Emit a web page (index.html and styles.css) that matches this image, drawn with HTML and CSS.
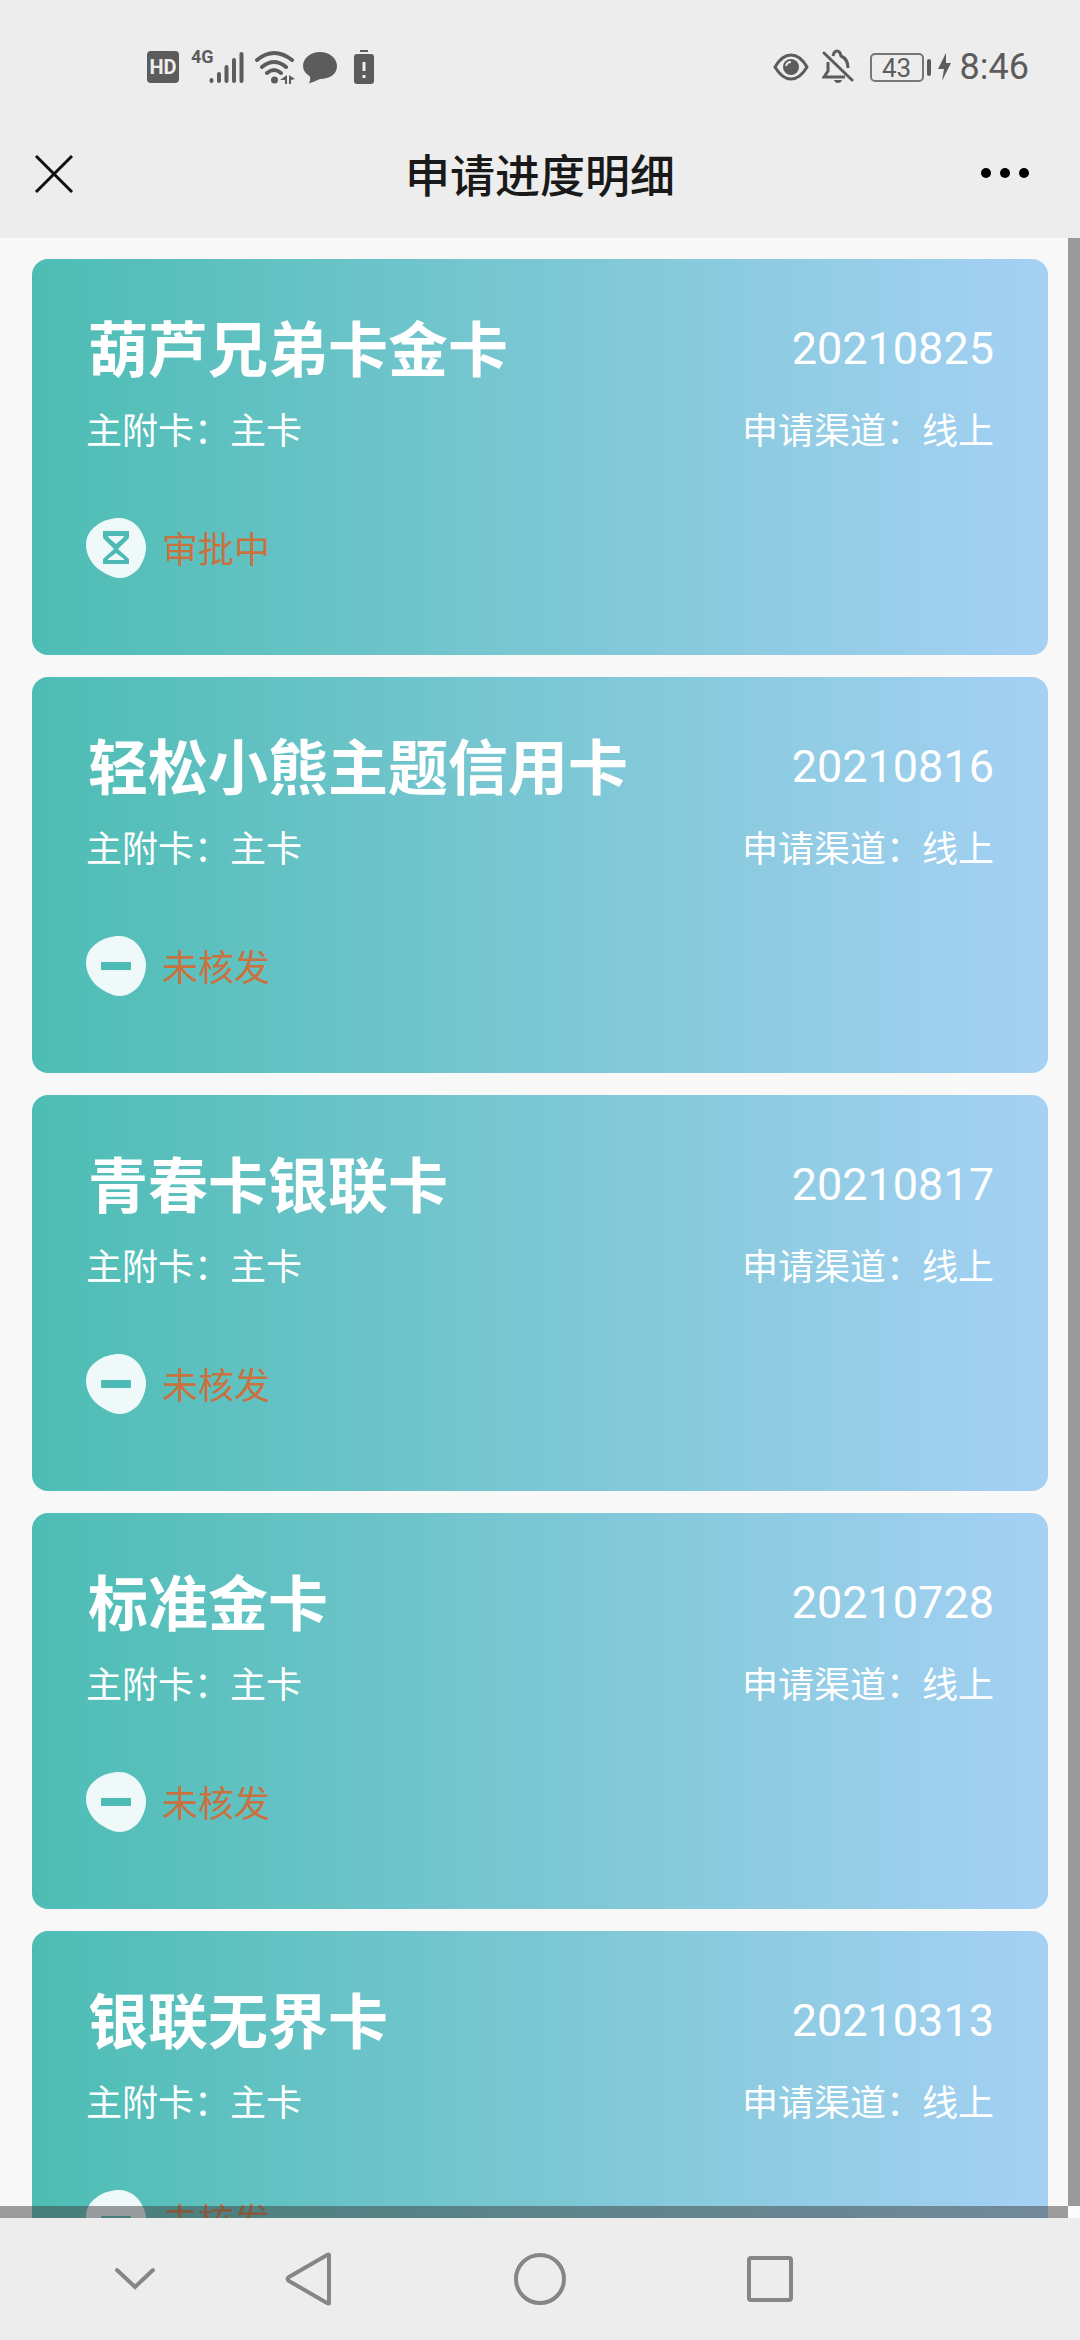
FILE: index.html
```html
<!DOCTYPE html>
<html lang="zh-CN">
<head>
<meta charset="utf-8">
<meta name="viewport" content="width=device-width, initial-scale=1">
<title>申请进度明细</title>
<link rel="stylesheet" href="styles.css">
</head>
<body>
<svg class="defs" aria-hidden="true">
  <symbol id="blob" viewBox="0 0 60 60">
    <path d="M33 0C44 0 52 7 56 15C59 21 60 25 60 29C60 37 57 44 53 50C48 56 41 60 34 60C26 60 17 55 10 49C4 43 0 35 0 27C0 18 4 12 11 7C18 2 26 0 33 0Z" fill="#f0f9fa"/>
  </symbol>
  <symbol id="pending" viewBox="0 0 60 60">
    <use href="#blob"/>
    <path d="M17 13H43V20L32 31L43 41V46H17V41L28 31L17 20ZM22 18H38L37 20L30 26L23 20ZM30 35L38 41V42H22V41Z" fill="#4fb9b5" fill-rule="evenodd"/>
  </symbol>
  <symbol id="rejected" viewBox="0 0 60 60">
    <use href="#blob"/>
    <rect x="15" y="26" width="30" height="8" rx="1" fill="#4dbbb5"/>
  </symbol>
</svg>
<div class="app">
  <div class="status">
    <div class="status-left">
      <svg width="32" height="36" viewBox="0 0 32 36"><rect y="2" width="32" height="32" rx="4" fill="#5c5c5c"/><text x="16" y="25" class="hd">HD</text></svg>
      <svg width="56" height="36" viewBox="0 0 56 36" class="signal"><text x="0" y="14" class="net">4G</text><path d="M20.500 32V31M28 32V25M35.500 32V18M43 32V11M50.500 32V5" stroke="#5c5c5c" stroke-width="4" stroke-linecap="round"/></svg>
      <svg width="40" height="36" viewBox="0 0 40 36"><g fill="none" stroke="#5c5c5c" stroke-width="4" stroke-linecap="round"><path d="M2 11Q19 -3 37 11M7 18Q19 8 31 18M12 24Q19 18 26 24"/></g><circle cx="19.500" cy="31" r="3.500" fill="#5c5c5c"/><path d="M25 31L32 26V35H30V31ZM34 26L40 30L36 31V35H34Z" fill="#5c5c5c"/></svg>
      <svg width="34" height="36" viewBox="0 0 34 36"><path d="M17 3C26 3 34 9 34 17S27 30 17 30Q13 32 6 34.500Q8 31 7 27.500Q0 23 0 17C0 9 8 3 17 3Z" fill="#5c5c5c"/></svg>
      <svg width="20" height="36" viewBox="0 0 20 36" class="low"><path d="M6 1H14V3H6ZM3 5H17Q20 5 20 8V32Q20 35 17 35H3Q0 35 0 32V8Q0 5 3 5Z" fill="#5c5c5c"/><path d="M10 13V22M10 26V29" stroke="#eee" stroke-width="3"/></svg>
    </div>
    <div class="status-right">
      <svg width="36" height="36" viewBox="0 0 36 36"><path d="M2 18Q9 6 18 6T34 18Q27 30 18 30T2 18Z" fill="none" stroke="#5c5c5c" stroke-width="3"/><circle cx="18" cy="18" r="8" fill="#5c5c5c"/><path d="M13 17Q14 13 18 13" stroke="#eee" stroke-width="2" fill="none"/></svg>
      <svg width="32" height="36" viewBox="0 0 32 36" class="bell"><g fill="none" stroke="#5c5c5c" stroke-width="3"><path d="M2 4L30 31" stroke-linecap="round"/><path d="M6 13V22L2 28H23M11 7Q12 2 15 2T19 7Q26 10 26 19"/></g><path d="M12 31H20Q19 34 16 34T12 31Z" fill="#5c5c5c"/></svg>
      <div class="battery"><span>43</span></div>
      <svg width="14" height="36" viewBox="0 0 14 36" class="bolt"><path d="M8 4L0 20H6L4 32L13 14H8Z" fill="#5c5c5c"/></svg>
      <time>8:46</time>
    </div>
  </div>
  <header class="titlebar">
    <button aria-label="关闭"><svg width="40" height="40" viewBox="0 0 40 40"><path d="M2 1L38 37M38 1L2 37" stroke="#111" stroke-width="3"/></svg></button>
    <h1>申请进度明细</h1>
    <button aria-label="更多"><svg width="50" height="40" viewBox="0 0 50 40"><circle cx="6" cy="18" r="5"/><circle cx="25" cy="18" r="5"/><circle cx="44" cy="18" r="5"/></svg></button>
  </header>
  <main class="content">
    <div class="list">
      <article class="card">
        <div class="row main"><h2>葫芦兄弟卡金卡</h2><time>20210825</time></div>
        <div class="row sub"><span>主附卡：主卡</span><span>申请渠道：线上</span></div>
        <div class="state"><svg><use href="#pending"/></svg><span>审批中</span></div>
      </article>
      <article class="card">
        <div class="row main"><h2>轻松小熊主题信用卡</h2><time>20210816</time></div>
        <div class="row sub"><span>主附卡：主卡</span><span>申请渠道：线上</span></div>
        <div class="state"><svg><use href="#rejected"/></svg><span>未核发</span></div>
      </article>
      <article class="card">
        <div class="row main"><h2>青春卡银联卡</h2><time>20210817</time></div>
        <div class="row sub"><span>主附卡：主卡</span><span>申请渠道：线上</span></div>
        <div class="state"><svg><use href="#rejected"/></svg><span>未核发</span></div>
      </article>
      <article class="card">
        <div class="row main"><h2>标准金卡</h2><time>20210728</time></div>
        <div class="row sub"><span>主附卡：主卡</span><span>申请渠道：线上</span></div>
        <div class="state"><svg><use href="#rejected"/></svg><span>未核发</span></div>
      </article>
      <article class="card">
        <div class="row main"><h2>银联无界卡</h2><time>20210313</time></div>
        <div class="row sub"><span>主附卡：主卡</span><span>申请渠道：线上</span></div>
        <div class="state"><svg><use href="#rejected"/></svg><span>未核发</span></div>
      </article>
    </div>
    <div class="bar-v"></div>
    <div class="bar-h"></div>
    <div class="bar-corner"></div>
  </main>
  <nav class="sysnav">
    <button class="first" aria-label="收起"><svg width="56" height="56" viewBox="0 0 56 56"><path d="M10 19L28 36L46 19"/></svg></button>
    <button aria-label="返回"><svg width="56" height="56" viewBox="0 0 56 56"><path d="M48 4V52Q48 53 46 52L8 30Q5 28 8 26L46 4Q48 3 48 4Z"/></svg></button>
    <button aria-label="主页"><svg width="56" height="56" viewBox="0 0 56 56"><circle cx="28" cy="28" r="24"/></svg></button>
    <button aria-label="最近任务"><svg width="56" height="56" viewBox="0 0 56 56"><rect x="7" y="7" width="42" height="42" rx="2"/></svg></button>
  </nav>
</div>
</body>
</html>
```
FILE: styles.css
```css
* { box-sizing: border-box; }
body {
  margin: 0;
  font-family: Roboto, "Noto Sans CJK SC", sans-serif;
  background: #ededed;
}
h1, h2 { margin: 0; }
svg { display: block; flex: none; }
button {
  border: 0;
  padding: 0;
  background: none;
  display: flex;
  align-items: center;
  justify-content: center;
}
.defs { position: absolute; width: 0; height: 0; }
.app {
  height: 100vh;
  display: flex;
  flex-direction: column;
}

/* phone status bar */
.status {
  flex: none;
  height: 112px;
  padding: 22px 51px 0 147px;
  display: flex;
  align-items: center;
  justify-content: space-between;
  color: #5c5c5c;
}
.status-left, .status-right { display: flex; align-items: center; }
.status-left { gap: 8px; }
.signal { margin-left: 4px; overflow: visible; }
.low { margin-left: 9px; }
.hd { font: bold 20px Roboto, sans-serif; fill: #eee; text-anchor: middle; }
.net { font: bold 18px "Liberation Sans Narrow", Roboto, sans-serif; fill: #5c5c5c; }
.bell { margin-left: 13px; }
.battery {
  position: relative;
  width: 54px;
  height: 29px;
  margin: 0 14px 0 16px;
  border: 2px solid #777;
  border-radius: 5px;
  font-size: 26px;
  line-height: 26px;
  text-align: center;
}
.battery::after {
  content: "";
  position: absolute;
  right: -9px;
  top: 4px;
  width: 4px;
  height: 17px;
  border-radius: 2px;
  background: #5c5c5c;
}
.status-right time {
  margin-left: 8px;
  font-size: 36px;
  line-height: 36px;
}

/* page title */
.titlebar {
  flex: none;
  height: 126px;
  padding: 0 50px 0 34px;
  display: grid;
  grid-template-columns: 66px 1fr 50px;
  align-items: center;
}
.titlebar button:first-child { justify-content: flex-start; }
.titlebar h1 {
  padding-top: 6px;
  font-size: 45px;
  line-height: 60px;
  font-weight: 500;
  text-align: center;
  color: #191919;
}

/* scrolling area */
.content {
  position: relative;
  flex: 1;
  min-height: 0;
  overflow: hidden;
  background: #f8f8f8;
}
.list {
  padding: 21px 32px;
  display: flex;
  flex-direction: column;
  gap: 22px;
}
.card {
  min-height: 396px;
  padding: 45px 54px;
  border-radius: 16px;
  color: #fff;
  background: linear-gradient(90deg, #4dbdb4, #88cadd 65%, #a5d1f4);
}
.row {
  display: flex;
  justify-content: space-between;
  align-items: center;
}
.main { line-height: 84px; }
.main h2 {
  padding: 6px 0 0 2px;
  font-size: 60px;
  font-weight: 700;
}
.main time { font-size: 45px; }
.sub {
  margin-top: 14px;
  font-size: 36px;
  line-height: 48px;
}
.state {
  margin-top: 62px;
  display: flex;
  align-items: center;
  gap: 16px;
  font-size: 36px;
  line-height: 48px;
  color: #c87240;
}
.state svg { width: 60px; height: 60px; }
.state span { padding-top: 6px; }
.bar-v, .bar-h, .bar-corner { position: absolute; background: rgba(0, 0, 0, 0.38); }
.bar-v { top: 0; right: 0; bottom: 12px; width: 12px; }
.bar-h { left: 0; right: 12px; bottom: 0; height: 12px; background: rgba(64, 64, 64, 0.5); }
.bar-corner { right: 0; bottom: 0; width: 12px; height: 12px; background: #fcfcfc; }

/* system navigation */
.sysnav {
  flex: none;
  height: 122px;
  display: grid;
  grid-template-columns: 76fr 118fr 230fr 231fr 230fr 195fr;
  align-items: center;
}
.sysnav .first { grid-column: 2; }
.sysnav svg { fill: none; stroke: #868686; stroke-width: 4; stroke-linecap: round; }
```
